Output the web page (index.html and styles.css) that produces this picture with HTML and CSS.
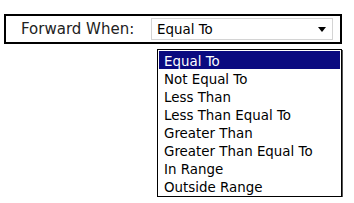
FILE: index.html
```html
<!DOCTYPE html>
<html lang="en">

<head>
    <meta charset="UTF-8">
    <meta name="viewport" content="width=device-width, initial-scale=1.0">
    <title>Forward When</title>
    <link rel="stylesheet" href="styles.css">
</head>

<body>
    <div class="field">
        <span class="label">Forward When:</span>
        <div class="select">
            <span class="value">Equal To</span>
            <span class="arrow"></span>
        </div>
    </div>

    <!-- open list of options -->
    <ul class="options">
        <li class="selected">Equal To</li>
        <li>Not Equal To</li>
        <li>Less Than</li>
        <li>Less Than Equal To</li>
        <li>Greater Than</li>
        <li>Greater Than Equal To</li>
        <li>In Range</li>
        <li>Outside Range</li>
    </ul>
</body>

</html>
```

FILE: styles.css
```css
body {
    margin: 0;
    padding: 14px 0 0 4px;
    background: #fff;
    font-family: "DejaVu Sans", Verdana, sans-serif;
}

.field {
    display: flex;
    align-items: center;
    box-sizing: border-box;
    width: 338px;
    height: 30px;
    padding-left: 15px;
    border: 2px solid #000;
}

.label {
    width: 130px;
    font-size: 15px;
    color: #222;
    line-height: 18px;
}

.select {
    display: flex;
    align-items: center;
    box-sizing: border-box;
    width: 182px;
    height: 22px;
    padding-left: 5px;
    border: 1px solid #d4d4d4;
    background: #fff;
}

.value {
    flex: 1;
    font-size: 13.4px;
    color: #000;
    padding-top: 1px;
}

.arrow {
    width: 0;
    height: 0;
    margin-right: 6px;
    border-left: 4px solid transparent;
    border-right: 4px solid transparent;
    border-top: 5px solid #000;
}

.options {
    box-sizing: border-box;
    width: 185px;
    margin: 5px 0 0 153px;
    padding: 1px;
    list-style: none;
    background: #fff;
    border: 1px solid #000;
    box-shadow: 1px 1px 0 #555;
}

.options li {
    height: 15px;
    padding: 3px 0 0 5px;
    font-size: 13.4px;
    line-height: 15px;
    color: #000;
    white-space: nowrap;
}

.options .selected {
    background: #0a0a80;
    color: #fff;
}
```
